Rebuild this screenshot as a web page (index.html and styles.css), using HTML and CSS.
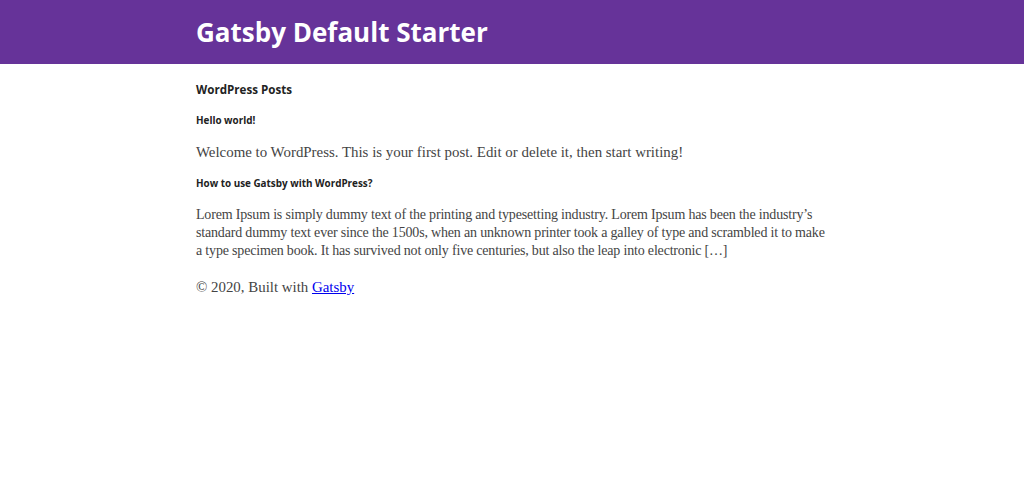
FILE: index.html
```html
<!DOCTYPE html>
<html lang="en">
<head>
    <meta charset="UTF-8">
    <meta name="viewport" content="width=device-width, initial-scale=1.0">
    <title>Gatsby Default Starter</title>
    <link rel="stylesheet" href="styles.css">
</head>
<body>
    <header class="site-header">
        <div class="header-inner">
            <h1 class="site-title">Gatsby Default Starter</h1>
        </div>
    </header>
    <div class="container">
        <main>
            <h3 class="section-title">WordPress Posts</h3>

            <div class="post">
                <h4 class="post-title">Hello world!</h4>
                <p>Welcome to WordPress. This is your first post. Edit or delete it, then start writing!</p>
            </div>

            <div class="post">
                <h4 class="post-title">How to use Gatsby with WordPress?</h4>
                <p class="excerpt">Lorem Ipsum is simply dummy text of the printing and typesetting industry. Lorem Ipsum has been the industry&rsquo;s standard dummy text ever since the 1500s, when an unknown printer took a galley of type and scrambled it to make a type specimen book. It has survived not only five centuries, but also the leap into electronic [&hellip;]</p>
            </div>
        </main>
        <footer class="site-footer">
            &copy; 2020, Built with <a href="https://www.gatsbyjs.org">Gatsby</a>
        </footer>
    </div>
</body>
</html>
```

FILE: styles.css
```css
body {
    margin: 0;
    font-family: "Liberation Serif", Georgia, serif;
    font-size: 14.9px;
    line-height: 18px;
    color: #444;
    background: #fff;
}

.site-header {
    background: #663399;
    height: 64px;
    display: flex;
    align-items: center;
}

.header-inner {
    width: 632px;
    margin: 0 auto;
}

.site-title {
    margin: 0;
    color: #fff;
    font-family: "Open Sans", "Noto Sans", sans-serif;
    font-size: 26px;
    font-weight: 700;
    line-height: 1;
}

.container {
    width: 632px;
    margin: 0 auto;
    padding-top: 18px;
}

.section-title {
    margin: 0 0 15px;
    font-family: "Open Sans", "Noto Sans", sans-serif;
    font-size: 11.6px;
    font-weight: 700;
    line-height: 16px;
    color: #222;
}

.post-title {
    margin: 0 0 16px;
    font-family: "Open Sans", "Noto Sans", sans-serif;
    font-size: 9.9px;
    font-weight: 700;
    line-height: 14px;
    color: #222;
}

.post p {
    margin: 0 0 15px;
}

.post .excerpt {
    font-size: 14px;
    letter-spacing: -0.18px;
}

.site-footer {
    margin-top: 18px;
}

a {
    color: #0000ee;
}
```
